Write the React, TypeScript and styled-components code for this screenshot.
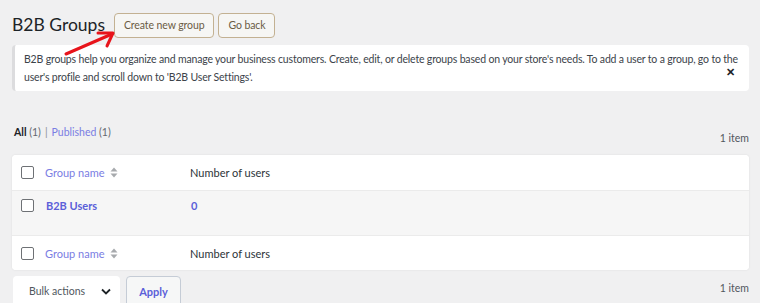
import React from 'react';
import styled, { createGlobalStyle } from 'styled-components';

const GlobalStyle = createGlobalStyle`
  html, body {
    margin: 0;
    padding: 0;
    background: #f0f0f1;
    font-family: 'Lato', 'Noto Sans', sans-serif;
    color: #3c434a;
  }
  * { box-sizing: border-box; }
`;

const Wrap = styled.div`
  position: relative;
  padding: 12px 11px 0 12px;
  height: 303px;
  overflow: hidden;
`;

const Header = styled.div`
  display: flex;
  align-items: center;
  gap: 4px;
`;

const Title = styled.h1`
  margin: 0 5px 0 0;
  font-size: 17.5px;
  font-weight: 400;
  color: #1d2327;
  line-height: 26px;
`;

const OutlineButton = styled.button`
  height: 25px;
  padding: 0 9px;
  font-family: inherit;
  font-size: 10.5px;
  letter-spacing: -0.1px;
  color: #6b5c45;
  background: #f6f6f4;
  border: 1.5px solid #c3b192;
  border-radius: 4px;
  cursor: pointer;
`;

const Notice = styled.div`
  position: relative;
  margin-top: 7px;
  padding: 5px 8px 5px 9px;
  background: #fff;
  border-left: 3px solid #dcdcde;
  border-radius: 4px;
  font-size: 10.5px;
  letter-spacing: -0.17px;
  line-height: 18px;
  color: #3c434a;
`;

const Dismiss = styled.span`
  position: absolute;
  right: 14px;
  top: 21px;
  font-size: 11px;
  line-height: 12px;
  font-weight: 700;
  color: #1d2327;
`;

const ViewsRow = styled.div`
  display: flex;
  justify-content: space-between;
  align-items: flex-start;
  margin-top: 35px;
  font-size: 10.5px;
  padding-left: 2px;
`;

const Views = styled.div`
  color: #646970;
  b { color: #1d2327; font-weight: 700; }
  a { color: #7a7de3; text-decoration: none; }
`;

const Sep = styled.span`
  margin: 0 4px;
  color: #8c8f94;
`;

const Count = styled.span`
  margin-top: 6px;
  color: #50575e;
`;

const Table = styled.div`
  margin-top: 11px;
  background: #fff;
  border-radius: 4px;
  box-shadow: 0 0 2px rgba(0, 0, 0, 0.1);
  overflow: hidden;
`;

const Row = styled.div<{ $h: number; $alt?: boolean; $top?: boolean }>`
  display: grid;
  grid-template-columns: 33px 145px 1fr;
  align-items: ${(p) => (p.$top ? 'start' : 'center')};
  height: ${(p) => p.$h}px;
  padding-top: ${(p) => (p.$top ? 8 : 0)}px;
  background: ${(p) => (p.$alt ? '#f6f6f6' : '#fff')};
  border-top: ${(p) => (p.$alt ? '1px solid #ebebeb' : 'none')};
  border-bottom: ${(p) => (p.$alt ? '1px solid #ebebeb' : 'none')};
  font-size: 11px;
  color: #2c3338;
`;

const Check = styled.span`
  width: 13px;
  height: 13px;
  margin-left: 9px;
  border: 1.5px solid #6e7175;
  border-radius: 2px;
  background: #fff;
`;

const SortLink = styled.span`
  display: inline-flex;
  align-items: center;
  gap: 5px;
  color: #7a7de3;
`;

const CellLink = styled.span`
  color: #5b5fd9;
  font-weight: 700;
  padding-left: 1px;
`;

const Footer = styled.div`
  display: flex;
  justify-content: space-between;
  align-items: flex-start;
  margin-top: 6px;
  font-size: 10.5px;
`;

const Actions = styled.div`
  display: flex;
  gap: 6px;
`;

const Select = styled.div`
  display: flex;
  align-items: center;
  justify-content: space-between;
  width: 107px;
  height: 30px;
  padding: 0 9px 0 16px;
  margin-left: 1px;
  background: #fff;
  border-radius: 4px 4px 0 0;
  color: #50575e;
  font-size: 10.5px;
`;

const Apply = styled.button`
  width: 55px;
  height: 30px;
  font-family: inherit;
  font-size: 11px;
  font-weight: 700;
  color: #5b5fd9;
  background: #f6f7f7;
  border: 1px solid #c5ccd6;
  border-radius: 4px 4px 0 0;
`;

const FooterCount = styled(Count)`
  margin-top: 6px;
`;

const Arrow = styled.svg`
  position: absolute;
  left: 0;
  top: 0;
  pointer-events: none;
`;

const SortIcon = () => (
  <svg width="8" height="11" viewBox="0 0 8 11">
    <path d="M4 0.5 L7.5 4.5 H0.5 Z" fill="#a7aaad" />
    <path d="M4 10.5 L7.5 6.5 H0.5 Z" fill="#a7aaad" />
  </svg>
);

const Chevron = () => (
  <svg width="10" height="7" viewBox="0 0 10 7">
    <path d="M1 1.5 L5 5.5 L9 1.5" stroke="#1d2327" strokeWidth="1.8" fill="none" />
  </svg>
);

const App: React.FC = () => (
  <>
    <GlobalStyle />
    <Wrap>
      <Header>
        <Title>B2B Groups</Title>
        <OutlineButton>Create new group</OutlineButton>
        <OutlineButton>Go back</OutlineButton>
      </Header>
      <Notice>
        B2B groups help you organize and manage your business customers. Create, edit, or delete groups based on your store's needs. To add a user to a group, go to the user's profile and scroll down to 'B2B User Settings'.
        <Dismiss>✕</Dismiss>
      </Notice>
      <ViewsRow>
        <Views>
          <b>All</b> (1)<Sep>|</Sep><a>Published</a> (1)
        </Views>
        <Count>1 item</Count>
      </ViewsRow>
      <Table>
        <Row $h={35}>
          <Check />
          <SortLink>
            Group name <SortIcon />
          </SortLink>
          <span>Number of users</span>
        </Row>
        <Row $h={46} $alt $top>
          <Check />
          <CellLink>B2B Users</CellLink>
          <CellLink>0</CellLink>
        </Row>
        <Row $h={34}>
          <Check />
          <SortLink>
            Group name <SortIcon />
          </SortLink>
          <span>Number of users</span>
        </Row>
      </Table>
      <Footer>
        <Actions>
          <Select>
            Bulk actions <Chevron />
          </Select>
          <Apply>Apply</Apply>
        </Actions>
        <FooterCount>1 item</FooterCount>
      </Footer>
      <Arrow width="760" height="303">
        <path d="M66 54 L112 34" stroke="#e8141b" strokeWidth="3" strokeLinecap="round" fill="none" />
        <path d="M98 33 L113 33 L107 46" stroke="#e8141b" strokeWidth="3" strokeLinecap="round" strokeLinejoin="round" fill="none" />
      </Arrow>
    </Wrap>
  </>
);

export default App;
